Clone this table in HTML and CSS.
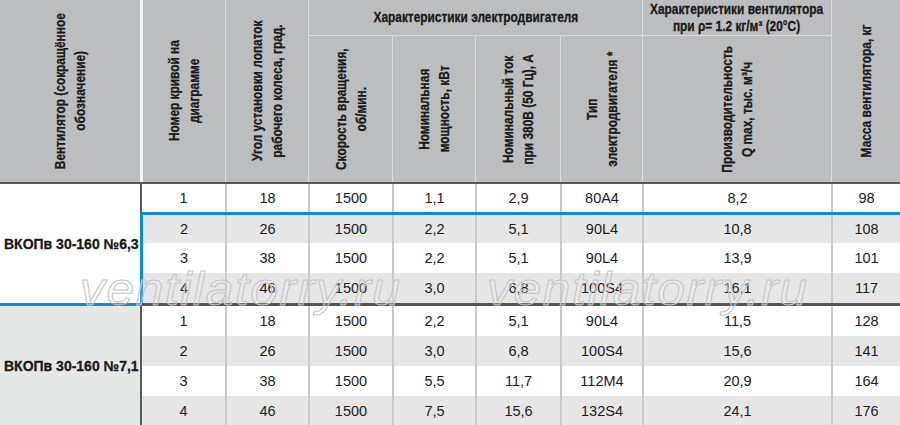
FILE: index.html
```html
<!DOCTYPE html>
<html lang="ru">
<head>
<meta charset="utf-8">
<title>ВКОПв 30-160</title>
<link rel="stylesheet" href="styles.css">
</head>
<body>
<div class="sheet">
  <div class="head">
    <div class="hc full col1"><div class="vt">Вентилятор (сокращённое<br>обозначение)</div></div>
    <div class="hc full col2"><div class="vt">Номер кривой на<br>диаграмме</div></div>
    <div class="hc full col3"><div class="vt">Угол установки лопаток<br>рабочего колеса, град.</div></div>
    <div class="hc grp motor"><span class="ht">Характеристики электродвигателя</span></div>
    <div class="hc grp fan"><span class="ht">Характеристики вентилятора<br>при ρ= 1.2 кг/м³ (20°С)</span></div>
    <div class="hc full col9"><div class="vt">Масса вентилятора, кг</div></div>
    <div class="hc sub col4"><div class="vt">Скорость вращения,<br>об/мин.</div></div>
    <div class="hc sub col5"><div class="vt">Номинальная<br>мощность, кВт</div></div>
    <div class="hc sub col6"><div class="vt">Номинальный ток<br>при 380В (50 Гц), А</div></div>
    <div class="hc sub col7"><div class="vt">Тип<br>электродвигателя *</div></div>
    <div class="hc sub col8"><div class="vt">Производительность<br>Q max, тыс. м³/ч</div></div>
  </div>

  <div class="group g1">
    <div class="label"><span>ВКОПв 30-160 №6,3</span></div>
    <div class="rows">
      <div class="row r1"><div class="cell">1</div><div class="cell">18</div><div class="cell">1500</div><div class="cell">1,1</div><div class="cell">2,9</div><div class="cell">80A4</div><div class="cell">8,2</div><div class="cell">98</div></div>
      <div class="row alt hl hltop"><div class="cell">2</div><div class="cell">26</div><div class="cell">1500</div><div class="cell">2,2</div><div class="cell">5,1</div><div class="cell">90L4</div><div class="cell">10,8</div><div class="cell">108</div></div>
      <div class="row hl"><div class="cell">3</div><div class="cell">38</div><div class="cell">1500</div><div class="cell">2,2</div><div class="cell">5,1</div><div class="cell">90L4</div><div class="cell">13,9</div><div class="cell">101</div></div>
      <div class="row alt hl sep"><div class="cell">4</div><div class="cell">46</div><div class="cell">1500</div><div class="cell">3,0</div><div class="cell">6,8</div><div class="cell">100S4</div><div class="cell">16,1</div><div class="cell">117</div></div>
    </div>
  </div>

  <div class="group g2">
    <div class="label"><span>ВКОПв 30-160 №7,1</span></div>
    <div class="rows">
      <div class="row"><div class="cell">1</div><div class="cell">18</div><div class="cell">1500</div><div class="cell">2,2</div><div class="cell">5,1</div><div class="cell">90L4</div><div class="cell">11,5</div><div class="cell">128</div></div>
      <div class="row alt"><div class="cell">2</div><div class="cell">26</div><div class="cell">1500</div><div class="cell">3,0</div><div class="cell">6,8</div><div class="cell">100S4</div><div class="cell">15,6</div><div class="cell">141</div></div>
      <div class="row"><div class="cell">3</div><div class="cell">38</div><div class="cell">1500</div><div class="cell">5,5</div><div class="cell">11,7</div><div class="cell">112M4</div><div class="cell">20,9</div><div class="cell">164</div></div>
      <div class="row alt"><div class="cell">4</div><div class="cell">46</div><div class="cell">1500</div><div class="cell">7,5</div><div class="cell">15,6</div><div class="cell">132S4</div><div class="cell">24,1</div><div class="cell">176</div></div>
    </div>
  </div>

  <span class="wm wm1">ventilatorry.ru</span>
  <span class="wm wm2">ventilatorry.ru</span>
</div>
</body>
</html>
```

FILE: styles.css
```css
html, body {
  margin: 0;
  padding: 0;
  background: #ffffff;
}

body {
  font-family: "Liberation Sans", Arial, sans-serif;
  color: #1c1c1c;
}

.sheet {
  position: relative;
  width: 900px;
  height: 425px;
  overflow: hidden;
}

/* ---------- header ---------- */
.head {
  display: grid;
  grid-template-columns: 140px 85px 83px 84px 83px 85px 82px 189px 69px;
  grid-template-rows: 36px 146px;
  background: #bcbdbf;
  border-bottom: 2px solid #585858;
}

.hc {
  display: flex;
  align-items: center;
  justify-content: center;
  box-sizing: border-box;
  border-left: 1px solid #dadbdc;
  min-width: 0;
  min-height: 0;
}

.full { grid-row: 1 / 3; }
.grp { grid-row: 1 / 2; border-bottom: 1px solid #dadbdc; }
.sub { grid-row: 2 / 3; }

.col1 { grid-column: 1 / 2; border-left: none; }
.col2 { grid-column: 2 / 3; border-left: 3px solid #f3f3f3; }
.col3 { grid-column: 3 / 4; }
.motor { grid-column: 4 / 8; }
.col4 { grid-column: 4 / 5; }
.col5 { grid-column: 5 / 6; }
.col6 { grid-column: 6 / 7; }
.col7 { grid-column: 7 / 8; }
.fan { grid-column: 8 / 9; }
.col8 { grid-column: 8 / 9; }
.col9 { grid-column: 9 / 10; }

.vt {
  writing-mode: vertical-rl;
  transform: rotate(180deg) scaleY(0.82);
  white-space: nowrap;
  text-align: center;
  font-weight: bold;
  font-size: 14.5px;
  line-height: 20px;
  color: #1a1a1a;
  -webkit-text-stroke: 0.3px #1a1a1a;
  flex: none;
}

.ht {
  display: inline-block;
  transform: scaleX(0.82);
  white-space: nowrap;
  text-align: center;
  font-weight: bold;
  font-size: 14.5px;
  line-height: 17px;
  color: #1a1a1a;
  -webkit-text-stroke: 0.3px #1a1a1a;
  flex: none;
}

/* ---------- body ---------- */
.group {
  display: flex;
}

.label {
  width: 140px;
  flex: none;
  box-sizing: border-box;
  display: flex;
  align-items: center;
  padding-left: 4px;
  font-weight: bold;
  font-size: 14px;
  color: #1a1a1a;
}

.label span {
  display: inline-block;
  white-space: nowrap;
  -webkit-text-stroke: 0.3px #1a1a1a;
}

.g1 .label {
  background: #ffffff;
  border-bottom: 3px solid #0b8ddf;
}

.g2 .label {
  background: #e6e7e7;
}

.rows {
  flex: 1;
}

.row {
  display: grid;
  grid-template-columns: 1fr 83px 84px 83px 85px 82px 189px 69px;
  height: 30px;
  box-sizing: border-box;
  border-left: 2px solid #5a5a5a;
  background: #ffffff;
  font-size: 14.5px;
  color: #1c1c1c;
}

.row.alt { background: #e6e6e6; }
.row.r1 { height: 28px; }
.row.hl { border-left: 3px solid #0b8ddf; }
.row.hltop { border-top: 3px solid #0b8ddf; height: 31px; }
.row.sep { border-bottom: 3px solid #555555; height: 33px; }

.cell {
  display: flex;
  align-items: center;
  justify-content: center;
  border-left: 2px solid #c9c9c9;
}

.cell:first-child {
  border-left: none;
}

/* ---------- watermark ---------- */
.wm {
  position: absolute;
  top: 266px;
  font-family: "Liberation Sans", Arial, sans-serif;
  font-style: italic;
  font-size: 46px;
  line-height: 46px;
  letter-spacing: 1.5px;
  color: rgba(255, 255, 255, 0.2);
  -webkit-text-stroke: 1px #c4c4c4;
  transform: scaleX(1.08);
  transform-origin: left center;
  white-space: nowrap;
  pointer-events: none;
}

.wm1 { left: 80px; }
.wm2 { left: 487px; }
```
